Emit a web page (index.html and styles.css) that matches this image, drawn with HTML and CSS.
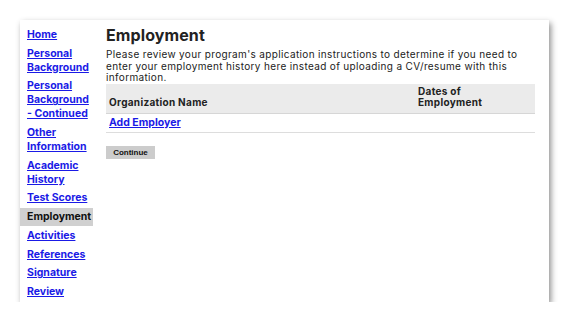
FILE: index.html
```html
<!DOCTYPE html>
<html>
<head>
<meta charset="utf-8">
<link rel="stylesheet" href="styles.css">
</head>
<body>
<div class="card">
  <nav class="side">
    <ul class="menu">
      <li class="item"><a href="#">Home</a></li>
      <li class="item"><a href="#">Personal Background</a></li>
      <li class="item"><a href="#">Personal Background - Continued</a></li>
      <li class="item"><a href="#">Other Information</a></li>
      <li class="item"><a href="#">Academic History</a></li>
      <li class="item"><a href="#">Test Scores</a></li>
      <li class="item current">Employment</li>
      <li class="item"><a href="#">Activities</a></li>
      <li class="item"><a href="#">References</a></li>
      <li class="item"><a href="#">Signature</a></li>
      <li class="item"><a href="#">Review</a></li>
    </ul>
  </nav>
  <main class="main">
    <h1 class="title">Employment</h1>
    <p class="intro">Please review your program's application instructions to determine if you need to enter your employment history here instead of uploading a CV/resume with this information.</p>
    <table class="grid">
      <thead>
        <tr>
          <th class="col-org">Organization Name</th>
          <th class="col-dates">Dates of Employment</th>
        </tr>
      </thead>
      <tbody>
        <tr>
          <td class="add" colspan="2"><a href="#">Add Employer</a></td>
        </tr>
      </tbody>
    </table>
    <button class="btn" type="button">Continue</button>
  </main>
</div>
</body>
</html>
```

FILE: styles.css
```css
html, body {
  margin: 0;
  padding: 0;
  background: #fff;
}
body {
  font-family: Inter, "DejaVu Sans", sans-serif;
  color: #222;
}
.card {
  margin: 20px 0 0 20px;
  width: 529px;
  height: 282px;
  background: #fff;
  box-shadow: 2px 3px 6px rgba(0,0,0,0.45);
  display: flex;
}
.side {
  width: 73px;
  flex: none;
  padding-top: 6px;
}
.menu {
  list-style: none;
  margin: 0;
  padding: 0;
}
.item {
  font-size: 10.5px;
  font-weight: bold;
  line-height: 14px;
  padding: 2px 0 2px 7px;
  margin-bottom: 0.7px;
}
.item a {
  color: #1a1ae6;
}
.item.current {
  background: #d0d0d0;
  color: #111;
}
.main {
  margin-left: 13px;
  width: 429px;
  padding-top: 7px;
}
.title {
  font-size: 16px;
  font-weight: bold;
  margin: 0;
  line-height: 16px;
  letter-spacing: 0.1px;
}
.intro {
  font-size: 10px;
  line-height: 11.5px;
  letter-spacing: 0.35px;
  margin: 6px 0 0 0;
}
.grid {
  width: 429px;
  border-collapse: collapse;
  table-layout: fixed;
  font-size: 10px;
}
.grid thead tr {
  background: #ebebeb;
  border-bottom: 1px solid #d6d6d6;
}
.grid th {
  text-align: left;
  vertical-align: bottom;
  font-weight: bold;
  line-height: 11.5px;
  letter-spacing: 0.3px;
  padding: 2px 3px 4px 3px;
  height: 21px;
}
.col-org {
  width: 303px;
}
.col-dates {
  padding-right: 40px !important;
}
.grid td {
  padding: 3px 3px 3px 3px;
  border-bottom: 1px solid #ddd;
  font-size: 10.5px;
  line-height: 12px;
}
.add a {
  color: #1a1ae6;
  font-weight: bold;
}
.btn {
  display: block;
  margin-top: 13px;
  width: 49px;
  height: 13px;
  padding: 0;
  border: none;
  background: #cccccc;
  font-family: "Liberation Sans", Arial, sans-serif;
  font-weight: bold;
  font-size: 8px;
  color: #111;
}
```
